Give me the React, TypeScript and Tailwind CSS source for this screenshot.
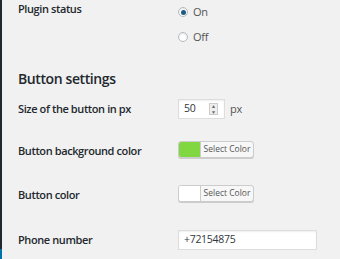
function Radio({ checked, label }: { checked?: boolean; label: string }) {
  return (
    <div className="flex h-[18px] items-center">
      <span className="flex h-[10px] w-[10px] items-center justify-center rounded-full border border-[#b4b9be] bg-white shadow-[inset_0_1px_2px_rgba(0,0,0,0.1)]">
        {checked && <span className="h-[5px] w-[5px] rounded-full bg-[#1e5b7e]" />}
      </span>
      <span className="ml-[5px] text-[11px] tracking-[-0.3px] text-[#555]">{label}</span>
    </div>
  );
}

function ColorButton({ color }: { color: string }) {
  return (
    <div className="flex h-[17px] w-[76px] overflow-hidden rounded-[3px] border border-[#ccc] bg-[#f7f7f7] shadow-[0_1px_0_#ccc]">
      <span className="h-full w-[22px] border-r border-[#ccc]" style={{ background: color }} />
      <span className="flex flex-1 items-center justify-center text-[8.5px] text-[#555]">Select Color</span>
    </div>
  );
}

const label = "w-[160px] text-[11px] tracking-[-0.4px] font-semibold";

export default function App() {
  return (
    <div className="flex h-[259px] w-[340px] overflow-hidden bg-[#f1f1f1] font-['Open_Sans',sans-serif] text-[#23282d]">
      <div className="flex w-[2px] flex-col bg-[#23282d]">
        <div className="flex-1" />
        <div className="h-[10px] bg-[#0073aa]" />
      </div>

      <div className="flex-1 pl-[16px]">
        <div className="flex">
          <div className={`${label} leading-[18px]`}>Plugin status</div>
          <div className="flex flex-col gap-[7px] pt-[3px]">
            <Radio checked label="On" />
            <Radio label="Off" />
          </div>
        </div>

        <h2 className="mt-[22px] text-[14px] leading-[22px] tracking-[-0.4px] font-semibold">Button settings</h2>

        <div className="mt-[9px] flex items-center">
          <div className={label}>Size of the button in px</div>
          <div className="flex h-[20px] w-[47px] items-center border border-[#ddd] bg-white pl-[5px] shadow-[inset_0_1px_2px_rgba(0,0,0,0.07)]">
            <span className="flex-1 text-[10.5px] tracking-[-0.2px] text-[#32373c]">50</span>
            <span className="mr-[6px] flex h-[12px] w-[9px] flex-col items-center justify-center gap-[1px] border border-[#ccc] bg-[#eee] text-[5px] leading-[5px] text-[#666]">
              <span>▲</span>
              <span>▼</span>
            </span>
          </div>
          <span className="ml-[5px] text-[11px] tracking-[-0.3px] text-[#555]">px</span>
        </div>

        <div className="mt-[22px] flex items-start">
          <div className={`${label} mt-[2px] leading-[16px]`}>Button background color</div>
          <ColorButton color="#81d742" />
        </div>

        <div className="mt-[26px] flex items-start">
          <div className={`${label} mt-[2px] leading-[16px]`}>Button color</div>
          <ColorButton color="#ffffff" />
        </div>

        <div className="mt-[27px] flex items-center">
          <div className={label}>Phone number</div>
          <div className="flex h-[20px] w-[139px] items-center border border-[#ddd] bg-white pl-[5px] text-[10.5px] tracking-[-0.3px] text-[#32373c] shadow-[inset_0_1px_2px_rgba(0,0,0,0.07)]">
            +72154875
          </div>
        </div>
      </div>
    </div>
  );
}
